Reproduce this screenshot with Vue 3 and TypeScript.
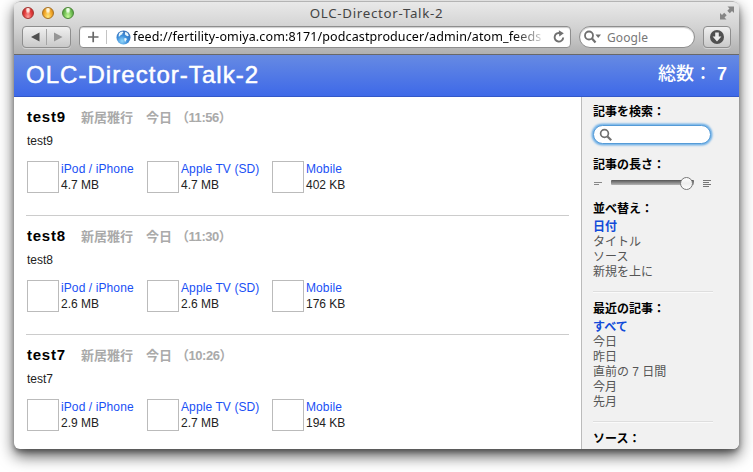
<script setup lang="ts">
interface Enclosure { name: string; size: string }
interface Article { title: string; time: string; files: Enclosure[] }

const makeFiles = (a: string, b: string, c: string): Enclosure[] => [
  { name: 'iPod / iPhone', size: a },
  { name: 'Apple TV (SD)', size: b },
  { name: 'Mobile', size: c },
]

const articles: Article[] = [
  { title: 'test9', time: '11:56', files: makeFiles('4.7 MB', '4.7 MB', '402 KB') },
  { title: 'test8', time: '11:30', files: makeFiles('2.6 MB', '2.6 MB', '176 KB') },
  { title: 'test7', time: '10:26', files: makeFiles('2.9 MB', '2.7 MB', '194 KB') },
]

const sortOptions: string[] = ['日付', 'タイトル', 'ソース', '新規を上に']
const recentOptions: string[] = ['すべて', '今日', '昨日', '直前の 7 日間', '今月', '先月']
</script>

<template>
  <div class="desktop">
    <div class="window">
      <div class="chrome">
        <div class="titlebar">
          <div class="lights">
            <i class="light red"></i><i class="light yellow"></i><i class="light green"></i>
          </div>
          <span class="wintitle">OLC-Director-Talk-2</span>
          <svg class="full" width="16" height="16" viewBox="0 0 16 16">
            <path d="M8.500 1.500H15V8l-2-2-2.200 2.200-2.500-2.500 2.200-2.200zM7.500 14.500H1V8l2 2 2.200-2.200 2.500 2.500-2.200 2.200z" fill="#858585" />
          </svg>
        </div>
        <div class="toolbar">
          <div class="nav">
            <svg width="47" height="20" viewBox="0 0 47 20">
              <path d="M16.500 5.500v9L8 10z" fill="#505050" />
              <path d="M23.500 2v16" stroke="#a5a5a5" />
              <path d="M31 5.500v9l8.500-4.500z" fill="#969696" />
            </svg>
          </div>
          <div class="address">
            <svg class="plus" width="28" height="20" viewBox="0 0 28 20">
              <path d="M8 10h10.500M13.200 4.800v10.500" stroke="#686868" stroke-width="1.700" />
              <path d="M26.500 3v14" stroke="#c4c4c4" />
            </svg>
            <svg class="globe" width="15" height="15" viewBox="0 0 15 15">
              <defs>
                <radialGradient id="sea" cx=".4" cy=".75" r=".75">
                  <stop offset="0" stop-color="#8fd6fb" /><stop offset=".55" stop-color="#3a8ad8" /><stop offset="1" stop-color="#3c6fb4" />
                </radialGradient>
              </defs>
              <circle cx="7.500" cy="7.500" r="7" fill="url(#sea)" />
              <path d="M3 3.500C4 2.200 5 1.700 6.500 1.500l1 1-1.300.9.300.9-1.800.7-.8 1.300-1.400.2zM8.500 8l1.800.3.600 1-1 1.200-.4 1.200-.8-.5-.4-1.700zM9.300 1.800L11.500 3l1.300 2.500-1 .8-1.800-.8-1.200-1.300z" fill="#eaf7fd" />
            </svg>
            <span class="url">feed://fertility-omiya.com:8171/podcastproducer/admin/atom_feeds</span>
            <svg class="reload" width="14" height="14" viewBox="0 0 14 14">
              <path d="M11.200 7.500A4.300 4.300 0 1 1 8.500 3.300" fill="none" stroke="#707070" stroke-width="1.900" />
              <path d="M6.800.3l5 3-4.500 3.200z" fill="#707070" />
            </svg>
          </div>
          <div class="google">
            <svg width="19" height="14" viewBox="0 0 19 14">
              <circle cx="6" cy="5.500" r="4" fill="none" stroke="#707070" stroke-width="1.800" />
              <path d="M9 8.500l3.500 4" stroke="#707070" stroke-width="2.200" />
              <path d="M12.500 4.500h5.500L15.200 8z" fill="#707070" />
            </svg>
            <span>Google</span>
          </div>
          <div class="download">
            <svg width="16" height="16" viewBox="0 0 16 16">
              <circle cx="8" cy="8" r="7" fill="#505050" />
              <path d="M6.200 3.500h3.600v4h2.600L8 12.500 3.600 7.500h2.600z" fill="#ededed" />
            </svg>
          </div>
        </div>
      </div>

      <header class="banner">
        <h1>OLC-Director-Talk-2</h1>
        <div class="total">総数： <b>7</b></div>
      </header>

      <div class="body">
        <main class="articles">
          <article v-for="a in articles" :key="a.title" class="article">
            <div class="heading">
              <h2>{{ a.title }}</h2>
              <span class="author">新居雅行</span>
              <span class="day">今日</span>
              <span class="time">（{{ a.time }}）</span>
            </div>
            <p class="summary">{{ a.title }}</p>
            <div class="files">
              <div v-for="f in a.files" :key="f.name" class="file">
                <div class="thumb"></div>
                <div class="meta">
                  <a>{{ f.name }}</a>
                  <span>{{ f.size }}</span>
                </div>
              </div>
            </div>
          </article>
        </main>

        <aside class="side">
          <h3>記事を検索：</h3>
          <div class="search">
            <svg width="14" height="14" viewBox="0 0 14 14">
              <circle cx="5.500" cy="5.500" r="3.900" fill="none" stroke="#707070" stroke-width="1.700" />
              <path d="M8.500 8.500l3.700 3.700" stroke="#707070" stroke-width="2.200" />
            </svg>
          </div>
          <h3>記事の長さ：</h3>
          <div class="slider">
            <svg width="120" height="16" viewBox="0 0 120 16">
              <defs>
                <linearGradient id="track" x1="0" y1="0" x2="0" y2="1">
                  <stop offset="0" stop-color="#555" /><stop offset="1" stop-color="#b5b5b5" />
                </linearGradient>
                <linearGradient id="knob" x1="0" y1="0" x2="0" y2="1">
                  <stop offset="0" stop-color="#fff" /><stop offset=".5" stop-color="#eee" /><stop offset="1" stop-color="#fff" />
                </linearGradient>
              </defs>
              <path d="M1 7.500h8M1 9.500h5" stroke="#888" />
              <rect x="18" y="5" width="83" height="5" rx="1" fill="url(#track)" />
              <circle cx="93.500" cy="8.500" r="6" fill="url(#knob)" stroke="#777" />
              <path d="M110 5.500h8M110 7.500h6M110 9.500h8M110 11.500h6" stroke="#777" />
            </svg>
          </div>
          <h3>並べ替え：</h3>
          <ul>
            <li v-for="(o, i) in sortOptions" :key="o" :class="{ active: i === 0 }">{{ o }}</li>
          </ul>
          <hr />
          <h3>最近の記事：</h3>
          <ul>
            <li v-for="(o, i) in recentOptions" :key="o" :class="{ active: i === 0 }">{{ o }}</li>
          </ul>
          <hr />
          <h3>ソース：</h3>
        </aside>
      </div>
    </div>
  </div>
</template>

<style>
body { margin: 0; background: #fff; }
</style>

<style scoped>
.desktop {
  box-sizing: border-box;
  width: 753px;
  height: 472px;
  padding: 1px 14px 23px;
  overflow: hidden;
  background: #fff;
  font-family: "Liberation Sans", "Noto Sans CJK JP", sans-serif;
}
.window {
  display: flex;
  flex-direction: column;
  width: 725px;
  height: 448px;
  overflow: hidden;
  border-radius: 6px;
  background: #fff;
  box-shadow: 0 7px 15px rgba(0, 0, 0, 0.65), 0 3px 5px rgba(0, 0, 0, 0.3);
}
.chrome {
  box-sizing: border-box;
  height: 54px;
  flex: none;
  border-top: 1px solid #b4b4b4;
  border-bottom: 1px solid #686868;
  border-radius: 6px 6px 0 0;
  background: linear-gradient(#e9e9e9, #d2d2d2 50%, #b0b0b0);
  font-family: "Noto Sans", sans-serif;
}
.titlebar { display: grid; grid-template-columns: 1fr auto 1fr; align-items: center; height: 23px; padding: 0 8px; }
.lights { display: flex; gap: 8px; margin-top: -2px; }
.light { box-sizing: border-box; width: 12px; height: 12px; border-radius: 50%; }
.red { border: 1px solid #a13431; background: radial-gradient(ellipse at 50% 18%, #ffe2df 0 15%, transparent 38%), radial-gradient(at 50% 90%, #ffa5a0, #e23b3b 55%, #b92428); }
.yellow { border: 1px solid #a67225; background: radial-gradient(ellipse at 50% 18%, #fff5d8 0 15%, transparent 38%), radial-gradient(at 50% 90%, #ffec83, #f4aa2c 55%, #c27a12); }
.green { border: 1px solid #4b8538; background: radial-gradient(ellipse at 50% 18%, #edffe4 0 15%, transparent 38%), radial-gradient(at 50% 90%, #caff9c, #75c258 55%, #438e32); }
.wintitle { margin-top: -2px; color: #444; font-size: 13.3px; line-height: 18px; letter-spacing: 0.7px; }
.full { justify-self: end; margin: -1px -4px 0 0; }
.toolbar { display: flex; height: 22px; margin-top: 1px; padding-left: 8px; }
.nav, .address, .google, .download { box-sizing: border-box; height: 22px; border: 1px solid #8e8e8e; box-shadow: 0 1px 0 rgba(255, 255, 255, 0.4); }
.nav { width: 49px; border-radius: 4px; background: linear-gradient(#f0f0f0, #c9c9c9); }
.nav svg { display: block; }
.address { display: flex; align-items: center; width: 492px; margin-left: 8px; border-radius: 4px; background: #fff; box-shadow: inset 0 1px 1px #ccc; }
.plus { flex: none; }
.globe { flex: none; margin-left: 8px; }
.url { width: 411px; margin-left: 2px; overflow: hidden; white-space: nowrap; font-size: 12.5px; line-height: 18px; letter-spacing: 0.12px; color: #000; -webkit-mask-image: linear-gradient(90deg, #000 380px, transparent 414px); mask-image: linear-gradient(90deg, #000 380px, transparent 414px); }
.reload { flex: none; margin-left: 8px; }
.google { display: flex; align-items: center; width: 116px; margin-left: 8px; padding-left: 3px; border-radius: 11px; background: #fff; box-shadow: inset 0 1px 1px #ccc; color: #777; font-size: 12px; }
.google span { margin-left: 5px; letter-spacing: 0.1px; }
.download { display: flex; align-items: center; justify-content: center; width: 28px; margin-left: 8px; border-radius: 4px; background: linear-gradient(#f0f0f0, #c9c9c9); }
.banner { box-sizing: border-box; display: flex; flex: none; justify-content: space-between; height: 42px; padding: 0 12px; border-bottom: 1px solid #3358c8; background: linear-gradient(#668ae3, #3e69e8); color: #fff; }
h1 { margin: 0; font-size: 24px; font-weight: 400; line-height: 40px; letter-spacing: 1.04px; -webkit-text-stroke: 0.5px #fff; }
.total { font-size: 18px; font-weight: 500; line-height: 38px; white-space: pre; }
.body { display: flex; flex: 1; min-height: 0; }
.articles { width: 567px; overflow: hidden; }
.article { box-sizing: border-box; height: 119px; margin: 0 12px; padding: 9px 0 0 1px; border-bottom: 1px solid #ccc; }
.heading { display: flex; align-items: center; height: 20px; color: #aaa; font-size: 13px; font-weight: 700; white-space: nowrap; }
h2 { width: 54px; margin: 0; color: #000; font-size: 15px; letter-spacing: 0.75px; }
.author { width: 65px; }
.day { width: 30px; }
.time { letter-spacing: -0.45px; }
.summary { margin: 8px 0 0; color: #222; font-size: 12px; line-height: 14px; }
.files { display: flex; margin-top: 13px; }
.file { display: flex; width: 120px; }
.file:nth-child(2) { width: 125px; }
.thumb { box-sizing: border-box; width: 32px; height: 32px; border: 1px solid #bbb; }
.meta { display: flex; flex-direction: column; padding-left: 2px; color: #222; font-size: 12px; line-height: 16px; white-space: nowrap; }
.meta a { color: #1a50f5; letter-spacing: 0.1px; }
.side { box-sizing: border-box; width: 158px; overflow: hidden; padding: 7px 26px 0 11px; border-left: 1px solid #bbb; background: #f1f1f1; font-size: 12px; }
h3 { height: 16px; margin: 0; color: #000; font-size: 12px; font-weight: 700; line-height: 16px; white-space: nowrap; }
.search { box-sizing: border-box; display: flex; align-items: center; width: 118px; height: 19px; margin: 5px 0 13px; padding-left: 5px; border: 1px solid #559bd7; border-radius: 10px; background: #fff; box-shadow: 0 0 2px 1.5px #72b2e8; }
.slider { height: 16px; margin: 2px 0 10px; }
.slider svg { display: block; }
ul { margin: 3px 0 0; padding: 0; list-style: none; }
li { height: 15px; color: #555; line-height: 15px; white-space: nowrap; }
.active { color: #124bd9; font-weight: 700; }
hr { height: 1px; margin: 11px 0 9px; border: 0; background: #dedede; box-shadow: 0 1px 0 #fafafa; }
</style>
